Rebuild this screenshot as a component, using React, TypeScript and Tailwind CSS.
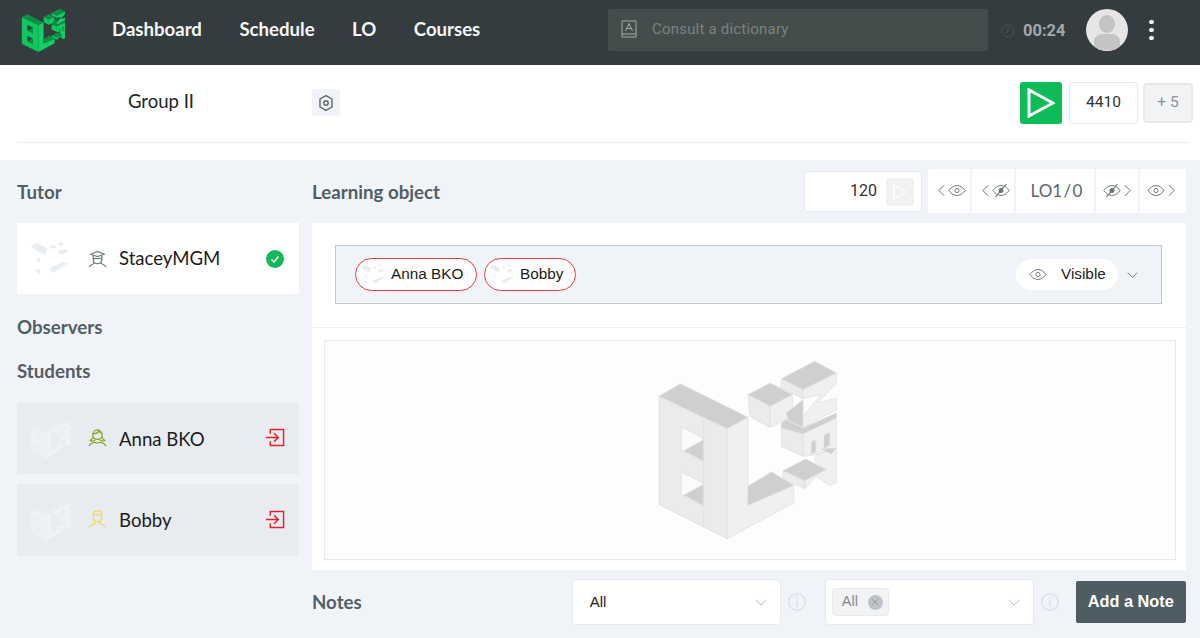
import React from "react";
import { X } from "lucide-react";

type Pal = { top: string; left: string; right: string; line: string; hole: string };

const grey: Pal = { top: "#cfcfcf", left: "#ebebeb", right: "#f0f0f0", line: "#dcdcdc", hole: "#fbfbfb" };
const green: Pal = { top: "#0a8f45", left: "#0fc95f", right: "#12d066", line: "#0aa34c", hole: "#343c3f" };
const faint: Pal = { top: "#e9edf0", left: "#eef1f4", right: "#f0f3f6", line: "#f6f8fa", hole: "#e9edf0" };

function Logo({ p, className }: { p: Pal; className: string }) {
  const f = (pts: string, fill: string) => <polygon points={pts} fill={fill} stroke={p.line} strokeWidth="2" strokeLinejoin="round" />;
  return (
    <svg viewBox="40 30 570 555" className={className}>
      {f("58,145 122,107 325,208 262,242", p.top)}
      {f("58,145 262,242 262,572 58,470", p.left)}
      {f("262,242 325,208 325,472 395,372 462,412 462,465 262,572", p.right)}
      {f("325,472 325,415 395,372 462,412", p.top)}
      <line x1="192" y1="215" x2="192" y2="540" stroke={p.line} strokeWidth="2" />
      {f("125,238 190,270 190,340 125,305", p.hole)}
      {f("133,308 190,277 190,338", p.top)}
      {f("125,372 190,405 190,472 125,438", p.hole)}
      {f("133,441 190,410 190,472", p.top)}
      {f("325,140 392,105 458,140 392,175", p.top)}
      {f("325,140 392,175 392,238 330,205", p.left)}
      {f("392,175 458,140 458,205 392,238", p.right)}
      {f("440,195 490,155 490,238 445,215", p.top)}
      {f("425,92 525,40 590,75 490,125", p.top)}
      {f("425,92 490,125 490,152 425,120", p.left)}
      {f("490,125 590,75 590,105 535,165 590,150 590,185 490,238 490,205 545,140 490,152", p.right)}
      {f("425,225 440,215 490,240 590,195 590,210 490,258 425,240", p.top)}
      {f("425,240 490,258 490,325 425,295", p.left)}
      {f("490,258 590,210 590,300 530,320 490,325", p.right)}
      {f("515,318 515,282 528,276 528,312", p.top)}
      {f("553,300 553,262 570,254 570,292", p.top)}
      {f("430,368 498,333 560,365 495,398", p.top)}
      {f("430,368 495,398 495,422 430,392", p.left)}
      {f("495,398 560,365 525,340 530,320 590,300 590,405 570,412 530,385 495,422", p.right)}
      {f("545,303 590,300 575,318", p.top)}
    </svg>
  );
}

function Scatter({ className }: { className: string }) {
  const c = "#e8edf1";
  return (
    <svg viewBox="0 0 40 34" className={className}>
      <polygon points="0,4 6,1 16,6 14,13 6,9" fill={c} />
      <polygon points="18,5 22,3 26,5 22,7" fill={c} />
      <polygon points="27,1 31,0 33,3 29,4" fill={c} />
      <polygon points="26,9 34,7 37,10 30,13" fill={c} />
      <polygon points="4,18 9,16 9,21" fill={c} />
      <polygon points="18,26 32,20 37,21 22,31" fill={c} />
      <polygon points="3,28 9,27 9,32" fill={c} />
    </svg>
  );
}

function EyeI({ off, color = "#6d7678", className = "w-[18px] h-[13px] -mt-[2px]" }: { off?: boolean; color?: string; className?: string }) {
  return (
    <svg viewBox="0 0 20 14" className={className} fill="none" stroke={color} strokeWidth="1.100">
      <path d="M1 7c2.500-3.500 5.500-5.500 9-5.500S16.500 3.500 19 7c-2.500 3.500-5.500 5.500-9 5.500S3.500 10.500 1 7z" />
      <circle cx="10" cy="7" r="2.300" fill={off ? color : "none"} />
      {off ? <path d="M4 14 16 0" strokeWidth="1.300" /> : null}
    </svg>
  );
}

function Chev({ dir }: { dir: "l" | "r" }) {
  return (
    <svg viewBox="0 0 8 14" className="w-[7px] h-[13px] -mt-[2px]" fill="none" stroke="#5f6b6e" strokeWidth="1.100">
      <path d={dir === "l" ? "M7 1 1 7l6 6" : "M1 1l6 6-6 6"} />
    </svg>
  );
}

function ChevD({ w, color }: { w: string; color: string }) {
  return (
    <svg viewBox="0 0 16 9" className={w} fill="none" stroke={color} strokeWidth="1.300">
      <path d="M1 1l7 7 7-7" />
    </svg>
  );
}

function InfoI({ className }: { className: string }) {
  return (
    <svg viewBox="0 0 18 18" className={`w-[18px] h-[18px] ${className}`} fill="none" stroke="#d3d8e2" strokeWidth="1.100">
      <circle cx="9" cy="9" r="8.300" />
      <path d="M9 7.500V14M9 4v1.800" />
    </svg>
  );
}

function Tutor() {
  return (
    <svg viewBox="0 0 20 19" className="w-[19px] h-[18px]" fill="none" stroke="#6f7e80" strokeWidth="1.300">
      <path d="M3 4.500 10 1.500l7 3-7 2.500z" />
      <path d="M5.500 6v4c0 3 2 4.500 4.500 4.500s4.500-1.500 4.500-4.500V6" />
      <path d="M5 9h10" />
      <path d="M1 18c1-2 3-3 5.500-4M19 18c-1-2-3-3-5.500-4" />
    </svg>
  );
}

function Student() {
  return (
    <svg viewBox="0 0 20 19" className="w-[19px] h-[18px] -mt-[2px]" fill="none" stroke="#7fa51d" strokeWidth="1.300">
      <circle cx="10" cy="6" r="5" />
      <path d="M5.500 5c2.500 0 5-1 6-3 .5 1.500 1.500 2.500 3 3" />
      <path d="M5.500 8c-.5 2-1.500 3-3 4 1.500 1 4 .5 5-.5M14.500 8c.5 2 1.500 3 3 4-1.500 1-4 .5-5-.5" />
      <path d="M1 18c1-2 3-3.500 6-4 2 1 4 1 6 0 3 .5 5 2 6 4" />
    </svg>
  );
}

function Bob() {
  return (
    <svg viewBox="0 0 20 19" className="w-[19px] h-[18px] -mt-[2px]" fill="none" stroke="#f7d64e" strokeWidth="1.300">
      <path d="M5.500 5c0-3 2-4 4.500-4s4.500 1 4.500 4v3c0 3-2 4.500-4.500 4.500S5.500 11 5.500 8z" />
      <path d="M5.500 5h9" />
      <path d="M7.500 12.500v1.500L1 18M12.500 12.500v1.500L19 18" />
    </svg>
  );
}

function Enter() {
  return (
    <svg viewBox="0 0 20 20" className="w-[19px] h-[19px] -mt-[2px]" fill="none" stroke="#e8202a" strokeWidth="1.500">
      <path d="M4.500 6V1.500h14v17h-14V14" />
      <path d="M0 10h12.500M8.500 5.500 13 10l-4.500 4.500" />
    </svg>
  );
}

function Head({ children, className = "" }: { children: React.ReactNode; className?: string }) {
  return <div className={`font-['Lato',sans-serif] font-bold text-[18.700px] leading-[24px] text-[#525e64] ${className}`}>{children}</div>;
}

function PersonRow({ name, icon, mark, bg, right, nameCls = "", className = "" }: { name: string; icon: React.ReactNode; mark: React.ReactNode; bg: string; right: React.ReactNode; nameCls?: string; className?: string }) {
  return (
    <div className={`flex items-center h-[71px] pl-[13px] pr-[14px] ${bg} ${className}`}>
      <div className="w-[42px] flex justify-center">{mark}</div>
      <div className="ml-[16px] w-[19px] flex">{icon}</div>
      <div className={`ml-[12px] flex-1 font-['Lato',sans-serif] text-[18.600px] text-[#1c1c1c] ${nameCls}`}>{name}</div>
      {right}
    </div>
  );
}

function Seg({ w, children, last }: { w: string; children: React.ReactNode; last?: boolean }) {
  return <div className={`flex items-center justify-center gap-[3px] h-full ${w} ${last ? "" : "border-r-2 border-[#f0f4f8]"}`}>{children}</div>;
}

function Chip({ name, w }: { name: string; w: string }) {
  return (
    <div className={`flex items-center h-[33px] ${w} rounded-[17px] border border-[#ee3a3f] bg-white pl-[5px]`}>
      <Scatter className="w-[25px] h-[22px]" />
      <span className="ml-[5px] font-['Liberation_Sans',sans-serif] text-[15.300px] text-[#1a1a1a]">{name}</span>
    </div>
  );
}

export default function App() {
  return (
    <div className="w-[1200px] h-[638px] overflow-hidden bg-[#f0f4f8] font-['Roboto',sans-serif]">
      <header className="h-[65px] bg-[#343c3f] flex items-center">
        <Logo p={green} className="ml-[20px] w-[47px] h-[45px] -mt-[5px]" />
        <nav className="ml-[45px] w-[496px] -mt-[5px] flex gap-[37.500px] font-['Lato',sans-serif] font-bold text-[18.600px] text-[#f4f6f6]">
          <span>Dashboard</span>
          <span>Schedule</span>
          <span>LO</span>
          <span>Courses</span>
        </nav>
        <div className="w-[380px] h-[42px] -mt-[5px] bg-[#454d4c] rounded-[2px] flex items-center pl-[13px]">
          <svg viewBox="0 0 16 18" className="w-[16px] h-[18px] -mt-[3px]" fill="none" stroke="#a5aaa9" strokeWidth="1">
            <path d="M1 1h14v13H1zM1 14v3h14v-3" />
            <path d="M4.500 11 8 3.500l3.500 7.500M5.700 8.500h4.600" />
          </svg>
          <span className="ml-[15px] -mt-[2px] text-[15px] tracking-[0.2px] text-[#7b8280]">Consult a dictionary</span>
        </div>
        <svg viewBox="0 0 14 14" className="ml-[13px] w-[14px] h-[14px] -mt-[4px]" fill="none" stroke="#4b5456" strokeWidth="1">
          <circle cx="7" cy="7" r="6" />
          <path d="M7 3v4l-2 2" />
        </svg>
        <span className="ml-[8px] -mt-[3px] text-[16.500px] font-bold text-[#a3a8a9]">00:24</span>
        <div className="ml-[20px] w-[42px] h-[42px] -mt-[5px] bg-[#e6e6e6] rounded-full flex items-center justify-center overflow-hidden">
          <svg viewBox="0 0 42 42" className="w-[42px] h-[42px]">
            <ellipse cx="21" cy="15" rx="8" ry="9" fill="#c4c4c4" />
            <path d="M8 41V33c0-5 4-8 8-8h10c4 0 8 3 8 8v8z" fill="#c4c4c4" />
          </svg>
        </div>
        <div className="ml-[21px] -mt-[5px] flex flex-col gap-[4px]">
          <span className="w-[5px] h-[4px] rounded-full bg-white" />
          <span className="w-[5px] h-[4px] rounded-full bg-white" />
          <span className="w-[5px] h-[4px] rounded-full bg-white" />
        </div>
      </header>

      <section className="h-[95px] bg-white">
        <div className="h-[78px] ml-[17px] mr-[10px] border-b border-[#e9eef0] flex items-start">
          <span className="ml-[111px] mt-[24px] font-['Lato',sans-serif] text-[18.500px] leading-[24px] text-[#222]">Group II</span>
          <div className="ml-[118px] mt-[24px] w-[28px] h-[27px] bg-[#f0f4f8] rounded-[2px] flex items-center justify-center">
            <svg viewBox="1 2 18 16" className="w-[18px] h-[16px]" fill="none" stroke="#5a6669" strokeWidth="1.400" strokeLinejoin="round">
              <path d="M10 2.700 16 6v8l-6 3.300L4 14V6z" />
              <circle cx="10" cy="10" r="2.200" />
            </svg>
          </div>
          <div className="ml-auto mt-[17px] flex items-start">
            <div className="w-[42px] h-[42px] bg-[#0dbc58] rounded-[3px] flex items-center justify-center">
              <svg viewBox="0 0 28 30" className="w-[28px] h-[30px]" fill="none" stroke="#fff" strokeWidth="3">
                <path d="M2 2v26l24-13z" />
              </svg>
            </div>
            <div className="ml-[7px] w-[69px] h-[42px] bg-white border border-[#e4e8ec] rounded-[4px] flex items-center justify-center text-[15.500px] text-[#333]">4410</div>
            <div className="ml-[5px] mt-[1px] w-[50px] h-[40px] bg-[#f2f3f5] border-2 border-[#e6e8ea] rounded-[4px] flex items-center justify-center text-[15.500px] text-[#8b9093] shrink-0 mr-[-3px]">+ 5</div>
          </div>
        </div>
      </section>

      <main className="flex pl-[17px]">
        <aside className="w-[282px]">
          <Head className="mt-[20px]">Tutor</Head>
          <PersonRow
            className="mt-[19px]"
            name="StaceyMGM"
            icon={<Tutor />}
            bg="bg-white"
            mark={<Scatter className="w-[40px] h-[34px]" />}
            right={
              <div className="w-[18px] h-[18px] mr-[1px] rounded-full bg-[#12b85a] flex items-center justify-center">
                <svg viewBox="0 0 10 10" className="w-[10px] h-[10px]" fill="none" stroke="#fff" strokeWidth="1.500">
                  <path d="M1.500 5.500 4 8l4.500-5.500" />
                </svg>
              </div>
            }
          />
          <Head className="mt-[21px]">Observers</Head>
          <Head className="mt-[20px]">Students</Head>
          <PersonRow className="mt-[20px]" nameCls="mt-[2px]" name="Anna BKO" icon={<Student />} bg="bg-[#e8ecf0]" mark={<Logo p={faint} className="w-[42px] h-[41px]" />} right={<Enter />} />
          <PersonRow className="mt-[10px] h-[72px]" nameCls="mt-[1px]" name="Bobby" icon={<Bob />} bg="bg-[#e8ecf0]" mark={<Logo p={faint} className="w-[42px] h-[41px]" />} right={<Enter />} />
        </aside>

        <div className="ml-[13px] w-[874px]">
          <div className="mt-[9px] h-[44px] flex items-center">
            <Head className="mt-[1px]">Learning object</Head>
            <div className="ml-auto w-[118px] h-[41px] mt-[1px] bg-white border border-[#e4e8ec] rounded-[4px] flex items-center justify-end pr-[7px]">
              <span className="text-[16px] text-[#333] mr-[9px] -mt-[2px]">120</span>
              <div className="w-[28px] h-[28px] bg-[#f2f2f2] rounded-[2px] flex items-center justify-center">
                <svg viewBox="0 0 14 16" className="w-[14px] h-[16px]" fill="none" stroke="#fff" strokeWidth="1.200">
                  <path d="M1 1v14l12-7z" />
                </svg>
              </div>
            </div>
            <div className="ml-[6px] w-[258px] h-[44px] bg-white rounded-[2px] flex items-center">
              <Seg w="w-[44px] pl-[5px]"><Chev dir="l" /><EyeI /></Seg>
              <Seg w="w-[44px] pl-[5px]"><Chev dir="l" /><EyeI off /></Seg>
              <Seg w="w-[80px] pl-[3px]"><span className="font-['Lato',sans-serif] text-[17px] [word-spacing:-3px] text-[#59666c]">LO1 / 0</span></Seg>
              <Seg w="w-[44px]"><EyeI off /><Chev dir="r" /></Seg>
              <Seg w="w-[46px] pr-[5px]" last><EyeI /><Chev dir="r" /></Seg>
            </div>
          </div>

          <div className="mt-[10px] h-[347px] bg-white">
            <div className="h-[105px] pt-[22px] pl-[23px] pr-[24px] border-b border-[#efefef]">
              <div className="h-[59px] bg-[#f0f4f8] border border-[#bcc8cc] flex items-center pl-[19px] pr-[23px]">
                <div className="flex gap-[7px]">
                  <Chip name="Anna BKO" w="w-[122px]" />
                  <Chip name="Bobby" w="w-[92px]" />
                </div>
                <div className="ml-auto w-[102px] h-[31px] bg-white rounded-[16px] flex items-center pl-[13px]">
                  <EyeI color="#6f7a7c" className="w-[18px] h-[13px]" />
                  <span className="ml-[14px] font-['Liberation_Sans',sans-serif] text-[15.300px] text-[#222]">Visible</span>
                </div>
                <ChevD w="ml-[9px] w-[11px] h-[6px]" color="#59666c" />
              </div>
            </div>
            <div className="ml-[12px] mr-[10px] mt-[12px] h-[220px] border border-[#e9e9e9] bg-[#fdfdfd] flex items-center justify-center">
              <Logo p={grey} className="w-[190px] h-[185px] -ml-[4px]" />
            </div>
          </div>

          <div className="mt-[9px] h-[46px] flex items-center">
            <Head>Notes</Head>
            <div className="ml-[210px] w-[209px] h-[46px] bg-white border border-[#e6eaee] rounded-[4px] flex items-center pl-[17px] pr-[13px]">
              <span className="flex-1 font-['Liberation_Sans',sans-serif] text-[15px] text-[#222]">All</span>
              <ChevD w="w-[12px] h-[7px]" color="#b4bbc0" />
            </div>
            <InfoI className="ml-[7px]" />
            <div className="ml-[19px] w-[209px] h-[46px] bg-white border border-[#e6eaee] rounded-[4px] flex items-center pl-[6px] pr-[13px]">
              <div className="h-[28px] w-[57px] bg-[#f2f3f5] border border-[#e8eaec] rounded-[4px] flex items-center pl-[9px]">
                <span className="font-['Liberation_Sans',sans-serif] text-[14.500px] text-[#85898d]">All</span>
                <span className="ml-[10px] w-[15px] h-[15px] rounded-full bg-[#bfc2c8] flex items-center justify-center">
                  <X size={12} strokeWidth={1} color="#6e7278" />
                </span>
              </div>
              <div className="flex-1" />
              <ChevD w="w-[12px] h-[7px]" color="#b4bbc0" />
            </div>
            <InfoI className="ml-[7px]" />
            <button className="ml-[17px] w-[110px] h-[42px] pb-[2px] bg-[#4d5d63] rounded-[2px] font-['Liberation_Sans',sans-serif] font-bold text-[16.300px] text-white">Add a Note</button>
          </div>
        </div>
      </main>
    </div>
  );
}
